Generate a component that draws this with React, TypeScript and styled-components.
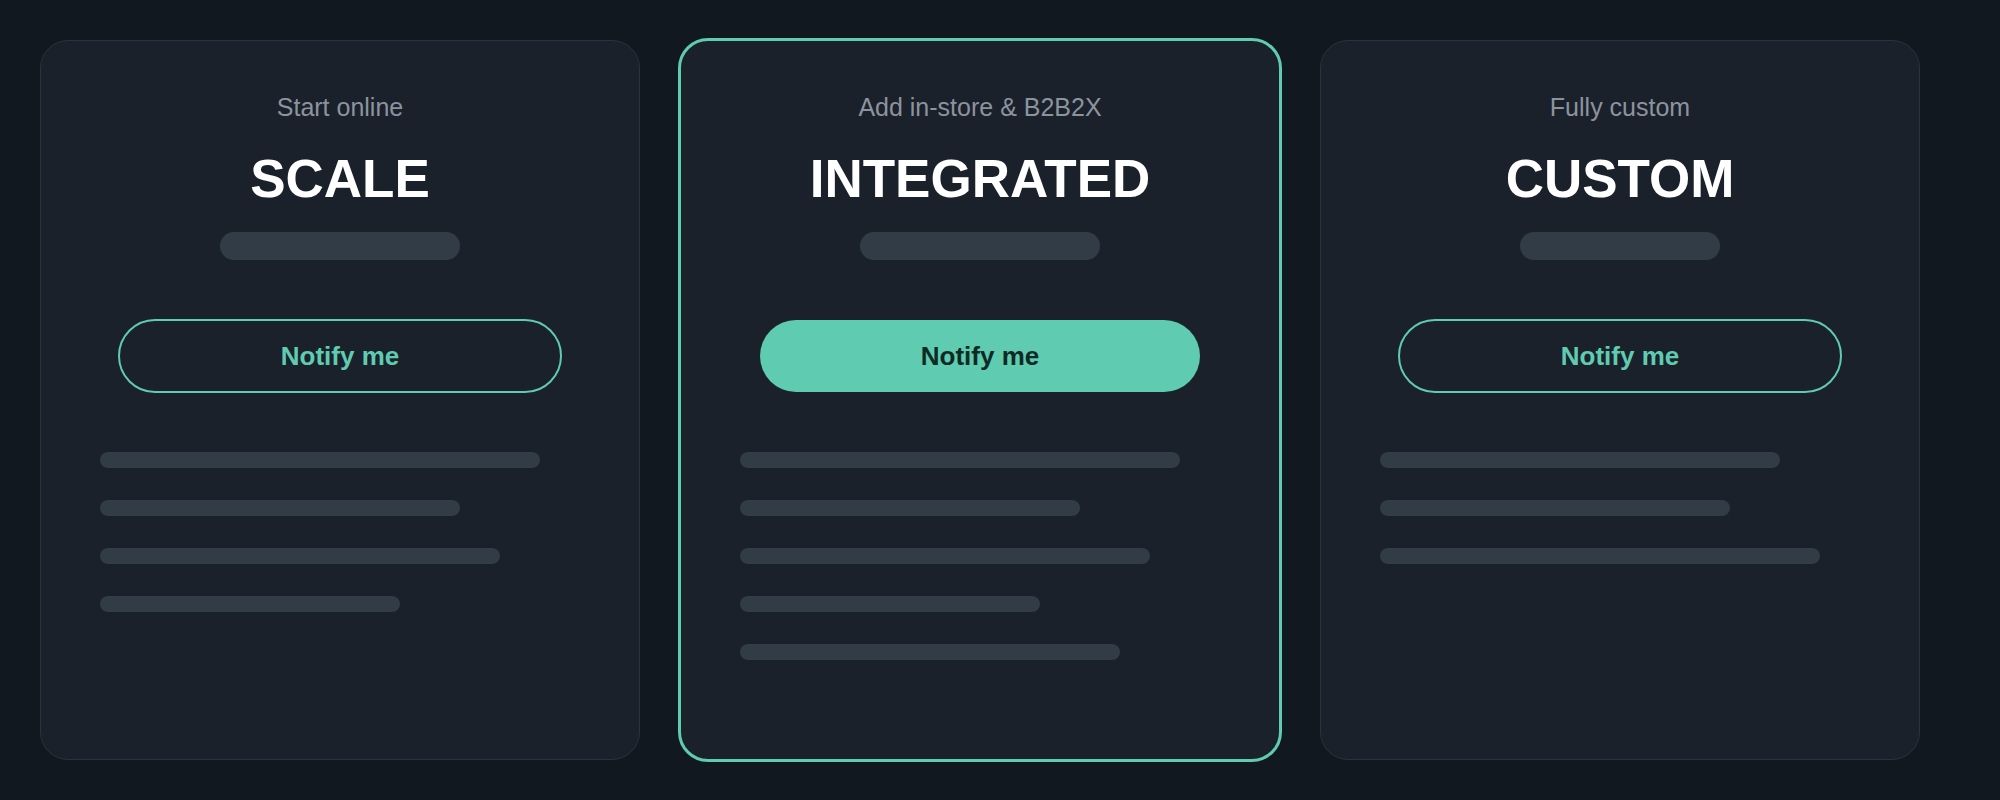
import React from "react"
import styled, { createGlobalStyle } from "styled-components"

const plans = [
  {
    tag: "Start online",
    name: "SCALE",
    price: 240,
    featured: false,
    features: [440, 360, 400, 300],
  },
  {
    tag: "Add in-store & B2B2X",
    name: "INTEGRATED",
    price: 240,
    featured: true,
    features: [440, 340, 410, 300, 380],
  },
  {
    tag: "Fully custom",
    name: "CUSTOM",
    price: 200,
    featured: false,
    features: [400, 350, 440],
  },
]

const App: React.FC = () => {
  return (
    <>
      <GlobalStyle />
      <Page>
        <Plans>
          {plans.map((plan) => (
            <Card key={plan.name} $featured={plan.featured}>
              <Tagline>{plan.tag}</Tagline>
              <PlanName>{plan.name}</PlanName>
              <PricePlaceholder style={{ width: plan.price }} />
              <NotifyButton $filled={plan.featured}>Notify me</NotifyButton>
              <FeatureList>
                {plan.features.map((w, i) => (
                  <FeatureBar key={i} style={{ width: w }} />
                ))}
              </FeatureList>
            </Card>
          ))}
        </Plans>
      </Page>
    </>
  )
}

const GlobalStyle = createGlobalStyle`
  html, body {
    margin: 0;
    padding: 0;
    background: #111820;
  }
  body {
    font-family: "Liberation Sans", Arial, sans-serif;
  }
`

const Page = styled.div`
  min-height: 800px;
  padding: 40px;
  box-sizing: border-box;
`

const Plans = styled.div`
  display: grid;
  grid-template-columns: repeat(3, 600px);
  grid-template-rows: 720px;
  column-gap: 40px;
`

const Card = styled.div<{ $featured: boolean }>`
  display: flex;
  flex-direction: column;
  align-items: center;
  box-sizing: border-box;
  padding-top: 51px;
  background: #1b212b;
  border: ${(p) => (p.$featured ? "3px solid #5fcbb1" : "1px solid #2b323d")};
  margin: ${(p) => (p.$featured ? "-2px" : "0")};
  border-radius: ${(p) => (p.$featured ? "30px" : "28px")};
`

const Tagline = styled.div`
  font-size: 25px;
  line-height: 30px;
  color: #8b949e;
`

const PlanName = styled.h2`
  margin: 27px 0 0;
  font-size: 53px;
  line-height: 60px;
  font-weight: 700;
  color: #ffffff;
`

const PricePlaceholder = styled.div`
  margin-top: 23px;
  height: 28px;
  border-radius: 14px;
  background: #323c47;
`

const NotifyButton = styled.button<{ $filled: boolean }>`
  box-sizing: border-box;
  width: ${(p) => (p.$filled ? "440px" : "444px")};
  height: ${(p) => (p.$filled ? "72px" : "74px")};
  margin: ${(p) => (p.$filled ? "60px 0 1px" : "59px 0 0")};
  border-radius: 37px;
  border: ${(p) => (p.$filled ? "none" : "2.5px solid #5fcbb1")};
  background: ${(p) => (p.$filled ? "#5fcbb1" : "transparent")};
  color: ${(p) => (p.$filled ? "#0e2a24" : "#5fcbb1")};
  font-family: "Liberation Sans", Arial, sans-serif;
  font-size: 26px;
  font-weight: 700;
  cursor: pointer;
`

const FeatureList = styled.div`
  align-self: stretch;
  display: flex;
  flex-direction: column;
  gap: 32px;
  margin-top: 59px;
  padding-left: 59px;
`

const FeatureBar = styled.div`
  height: 16px;
  border-radius: 8px;
  background: #323c47;
`

export default App
